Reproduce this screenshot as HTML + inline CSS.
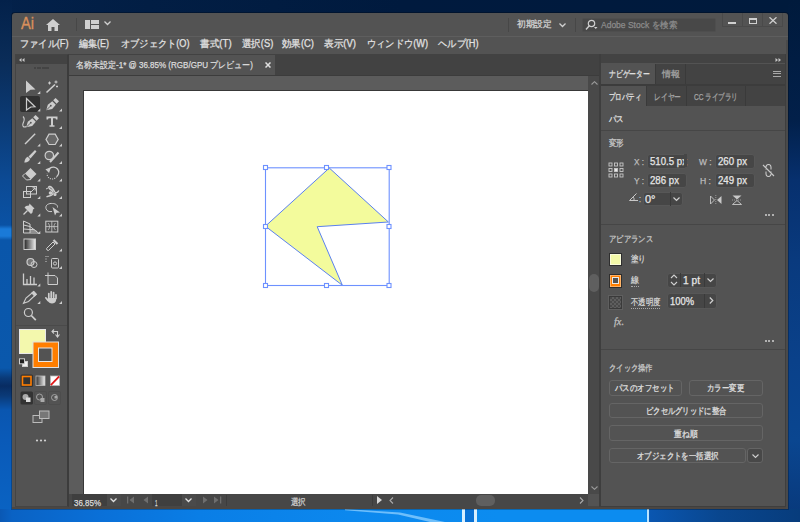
<!DOCTYPE html>
<html><head><meta charset="utf-8">
<style>
*{box-sizing:border-box;margin:0;padding:0}
html,body{width:800px;height:522px;overflow:hidden}
body{position:relative;font-family:"Liberation Sans",sans-serif;color:#e2e2e2;font-size:10px;
background:linear-gradient(180deg,#001634 0px,#00204a 100px,#053a7a 200px,#0a4d9c 300px,#0a58b0 420px,#0a66c8 500px,#0c6fd6 522px);}
.a{position:absolute}
.t{position:absolute;white-space:nowrap;line-height:1;transform-origin:0 0;-webkit-text-stroke:0.25px currentColor}
.fld{position:absolute;background:#464646;border:1px solid #575757;border-radius:3px}
.btn{position:absolute;border:1px solid #656565;border-radius:3px;background:#535353}
</style></head><body>
<!-- wallpaper details -->
<div class="a" style="left:0;top:0;width:800px;height:13px;background:linear-gradient(90deg,#03214a 0,#021e44 150px,#001a3e 400px,#001a3c 800px)"></div>
<div class="a" style="left:0;top:0;width:12px;height:522px;background:linear-gradient(180deg,#03214a 0,#0a2c58 60px,#0b3a74 120px,#0c4a94 180px,#0a52a4 225px,#1a7ad8 229px,#1a7ad8 236px,#0a56aa 240px,#0a58ac 368px,#0a3a78 378px,#082c62 386px,#0a3a78 396px,#0a56b0 410px,#0a5ab8 440px,#0a64c4 522px)"></div>
<div class="a" style="left:788px;top:0;width:12px;height:522px;background:linear-gradient(180deg,#001a3c 0,#02204a 120px,#07306e 180px,#093a7e 260px,#0a418a 360px,#0a4690 440px,#08387a 522px)"></div>
<div class="a" style="left:0;top:509px;width:800px;height:13px;background:linear-gradient(90deg,#0a58b4 0,#0a62c4 12px,#0a70d8 100px,#0a7ee6 200px,#0c88ee 350px,#0c8cf0 500px,#0c8cf0 646px,#0a56b0 650px,#09468e 720px,#073c7c 800px)"></div>
<svg class="a" style="left:0;top:509px" width="800" height="13" viewBox="0 509 800 13"><path d="M345 509 L400 512.5 L445 522 L430 522 L398 514.5 L345 510.2 Z" fill="#8fd0ff" opacity="0.75"/></svg>
<div class="a" style="left:461.5px;top:509px;width:3px;height:13px;background:#d8efff"></div><div class="a" style="left:465px;top:509px;width:9px;height:13px;background:#0a72d6"></div>
<div class="a" style="left:474px;top:509px;width:3px;height:13px;background:#d8efff"></div>
<div class="a" style="left:647px;top:509px;width:2px;height:13px;background:#b8e4ff"></div>

<div class="a" style="left:12px;top:13px;width:776px;height:496px;background:#535353;border-radius:3px 3px 0 0;box-shadow:0 0 0 1px rgba(0,0,0,.25)"></div>

<!-- title bar -->
<div class="t" style="transform:scaleX(0.913);left:20.8px;top:15.8px;font-size:16px;color:#d9905c;-webkit-text-stroke:0.35px #d9905c">Ai</div>
<svg class="a" style="left:46px;top:19px" width="14" height="12" viewBox="0 0 14 12"><path d="M7 0 L14 6 L12 6 L12 12 L8.5 12 L8.5 8 L5.5 8 L5.5 12 L2 12 L2 6 L0 6 Z" fill="#cfcfcf"/></svg>
<div class="a" style="left:76px;top:18px;width:1px;height:13px;background:#474747"></div>
<svg class="a" style="left:85px;top:20px" width="14" height="9" viewBox="0 0 14 9"><rect x="0" y="0" width="5" height="9" fill="#cfcfcf"/><rect x="6" y="0" width="8" height="4" fill="#cfcfcf"/><rect x="6" y="5" width="8" height="4" fill="#cfcfcf"/></svg>
<svg class="a" style="left:104px;top:21px" width="7" height="5" viewBox="0 0 7 5"><path d="M0.5 0.5 L3.5 3.5 L6.5 0.5" stroke="#d0d0d0" stroke-width="1.3" fill="none"/></svg>

<div class="a" style="left:508px;top:18px;width:1px;height:14px;background:#474747"></div>
<div class="t" style="transform:scaleX(0.972);left:517px;top:20px;font-size:9px;color:#d4d4d4">初期設定</div>
<svg class="a" style="left:559px;top:23px" width="7" height="5" viewBox="0 0 7 5"><path d="M0.5 0.5 L3.5 3.5 L6.5 0.5" stroke="#d0d0d0" stroke-width="1.3" fill="none"/></svg>
<div class="a" style="left:575px;top:18px;width:1px;height:14px;background:#474747"></div>
<div class="a" style="left:582px;top:18px;width:134px;height:14px;background:#484848;border:1px solid #4e4e4e;border-radius:2px"></div>
<svg class="a" style="left:585px;top:19px" width="13" height="12" viewBox="0 0 13 12"><circle cx="6.5" cy="4.5" r="3.2" stroke="#d0d0d0" stroke-width="1.2" fill="none"/><path d="M4.3 6.8 L1 10.5" stroke="#d0d0d0" stroke-width="1.4"/><path d="M9 8 L12.5 8 L10.75 10 Z" fill="#d0d0d0"/></svg>
<div class="t" style="transform:scaleX(0.944);left:601px;top:21px;font-size:9px;color:#8c8c8c">Adobe Stock を検索</div>
<div class="a" style="left:722px;top:13px;width:61px;height:14px;border:1px solid #4a4a4a;border-top:none"></div>
<div class="a" style="left:742px;top:13px;width:1px;height:13px;background:#4a4a4a"></div>
<div class="a" style="left:762px;top:13px;width:1px;height:13px;background:#4a4a4a"></div>
<div class="a" style="left:728px;top:21.5px;width:8px;height:2px;background:#d0d0d0"></div>
<div class="a" style="left:749px;top:17.5px;width:7.5px;height:6px;border:1.3px solid #d0d0d0;border-top-width:2px"></div>
<svg class="a" style="left:769px;top:16.5px" width="8" height="7" viewBox="0 0 8 7"><path d="M0.5 0.3 L7.5 6.7 M7.5 0.3 L0.5 6.7" stroke="#d0d0d0" stroke-width="1.3"/></svg>

<!-- menu bar -->
<div class="a" style="left:12px;top:36px;width:776px;height:1px;background:#5e5e5e"></div>
<div class="t" style="transform:scaleX(0.919);left:20.3px;top:39px;font-size:10px">ファイル(F)</div>
<div class="t" style="transform:scaleX(0.900);left:79px;top:39px;font-size:10px">編集(E)</div>
<div class="t" style="transform:scaleX(0.920);left:120.5px;top:39px;font-size:10px">オブジェクト(O)</div>
<div class="t" style="transform:scaleX(0.964);left:200px;top:39px;font-size:10px">書式(T)</div>
<div class="t" style="transform:scaleX(0.939);left:241.5px;top:39px;font-size:10px">選択(S)</div>
<div class="t" style="transform:scaleX(0.944);left:282px;top:39px;font-size:10px">効果(C)</div>
<div class="t" style="transform:scaleX(0.960);left:324px;top:39px;font-size:10px">表示(V)</div>
<div class="t" style="transform:scaleX(0.923);left:366.5px;top:39px;font-size:10px">ウィンドウ(W)</div>
<div class="t" style="transform:scaleX(0.925);left:438.4px;top:39px;font-size:10px">ヘルプ(H)</div>

<!-- left toolbar panel -->
<div class="a" style="left:15px;top:54px;width:54px;height:453px;background:#535353;border:1px solid #444;border-right:2px solid #3c3c3c"></div>
<div class="a" style="left:12px;top:507px;width:776px;height:2px;background:#4b4642"></div>
<div class="a" style="left:16px;top:55px;width:51px;height:9px;background:#434343"></div>
<svg class="a" style="left:19px;top:57.5px" width="6" height="4" viewBox="0 0 6 4"><path d="M2.5 0 L0 2 L2.5 4 Z M5.5 0 L3 2 L5.5 4 Z" fill="#c8c8c8"/></svg>
<div class="a" style="left:33.5px;top:66.5px;width:15px;height:2px;background:repeating-linear-gradient(90deg,#444 0 2px,transparent 2px 2.5px)"></div>
<div class="a" style="left:20px;top:96px;width:20px;height:16px;background:#303030;border-radius:2px"></div>
<div class="a" style="left:16px;top:325px;width:51px;height:1px;background:#4a4a4a"></div>

<!-- document area -->
<div class="a" style="left:69px;top:54px;width:530px;height:21px;background:#424242"></div>
<div class="a" style="left:69px;top:55px;width:206px;height:20px;background:#535353"></div>
<div class="t" style="transform:scaleX(0.891);left:76px;top:60.5px;font-size:9px;color:#dcdcdc">名称未設定-1* @ 36.85% (RGB/GPU プレビュー)</div>
<svg class="a" style="left:265px;top:62px" width="6" height="6" viewBox="0 0 6 6"><path d="M0.5 0.5 L5.5 5.5 M5.5 0.5 L0.5 5.5" stroke="#e0e0e0" stroke-width="1.5"/></svg>
<div class="a" style="left:69px;top:75px;width:530px;height:1px;background:#3c3c3c"></div>
<div class="a" style="left:69px;top:76px;width:519px;height:418px;background:#5c5c5c"></div>
<div class="a" style="left:83px;top:90px;width:505px;height:404px;background:#fff;border-left:1px solid #383838;border-top:1px solid #383838;border-top-left-radius:1px"></div>
<!-- vertical scrollbar -->
<div class="a" style="left:588px;top:76px;width:11px;height:418px;background:#494949"></div>
<svg class="a" style="left:590.5px;top:80.5px" width="7" height="4" viewBox="0 0 7 4"><path d="M0.5 3.5 L3.5 0.7 L6.5 3.5" stroke="#9a9a9a" stroke-width="1.1" fill="none"/></svg>
<svg class="a" style="left:590.5px;top:486px" width="7" height="4" viewBox="0 0 7 4"><path d="M0.5 0.5 L3.5 3.3 L6.5 0.5" stroke="#9a9a9a" stroke-width="1.1" fill="none"/></svg>
<div class="a" style="left:589px;top:274px;width:10px;height:18px;background:#5f5f5f;border-radius:5px"></div>
<div class="a" style="left:599px;top:54px;width:2px;height:453px;background:#3e3e3e"></div>

<!-- status bar -->
<div class="a" style="left:69px;top:494px;width:530px;height:13px;background:#474747"></div>
<div class="a" style="left:72px;top:494px;width:35px;height:12px;background:#3f3f3f"></div>


<!-- right dock -->
<div class="a" style="left:601px;top:54px;width:185px;height:453px;background:#535353;border-right:1px solid #3e3e3e;border-bottom:1px solid #3e3e3e"></div>
<div class="a" style="left:786px;top:40px;width:2px;height:469px;background:#4a4a4a"></div>
<div class="a" style="left:601px;top:54px;width:184px;height:9px;background:#434343"></div>
<div class="a" style="left:601px;top:64px;width:184px;height:20px;background:#434343"></div>
<div class="a" style="left:601px;top:64px;width:54px;height:20px;background:#535353"></div>
<div class="t" style="transform:scaleX(0.759);left:608.5px;top:70px;font-size:9px">ナビゲーター</div>
<div class="t" style="transform:scaleX(1.000);left:662px;top:70px;font-size:9px;color:#a4a4a4">情報</div>
<div class="a" style="left:601px;top:84px;width:184px;height:2px;background:#3c3c3c"></div>
<div class="a" style="left:601px;top:86px;width:184px;height:20px;background:#434343"></div>
<div class="a" style="left:601px;top:86px;width:45px;height:20px;background:#535353"></div>
<div class="t" style="transform:scaleX(0.722);left:608.5px;top:92.5px;font-size:9px">プロパティ</div>
<div class="t" style="transform:scaleX(0.750);left:654px;top:92.5px;font-size:9px;color:#a4a4a4">レイヤー</div>
<div class="t" style="transform:scaleX(0.727);left:694px;top:92.5px;font-size:9px;color:#a4a4a4">CC ライブラリ</div>
<div class="t" style="transform:scaleX(0.833);left:608.5px;top:115px;font-size:9px">パス</div>
<div class="a" style="left:601px;top:130px;width:184px;height:1px;background:#464646"></div>
<div class="t" style="transform:scaleX(0.833);left:608.6px;top:139px;font-size:9px;color:#c8c8c8">変形</div>



<!-- dock header icons -->
<svg class="a" style="left:775px;top:57.5px" width="6" height="4" viewBox="0 0 6 4"><path d="M0.5 0 L3 2 L0.5 4 Z M3.5 0 L6 2 L3.5 4 Z" fill="#c8c8c8"/></svg>
<div class="a" style="left:773px;top:70.5px;width:8px;height:1px;background:#a8a8a8"></div>
<div class="a" style="left:773px;top:73px;width:8px;height:1px;background:#a8a8a8"></div>
<div class="a" style="left:773px;top:75.5px;width:8px;height:1px;background:#a8a8a8"></div>
<div class="a" style="left:655px;top:64px;width:1px;height:20px;background:#3a3a3a"></div>
<div class="a" style="left:685px;top:64px;width:1px;height:20px;background:#3a3a3a"></div>
<div class="a" style="left:646px;top:86px;width:1px;height:20px;background:#3a3a3a"></div>
<div class="a" style="left:686px;top:86px;width:1px;height:20px;background:#3a3a3a"></div>
<div class="a" style="left:744.5px;top:86px;width:1px;height:20px;background:#3a3a3a"></div>

<!-- transform -->
<svg class="a" style="left:608px;top:162px" width="16" height="16" viewBox="0 0 16 16" fill="none" stroke="#c8c8c8" stroke-width="0.9">
<rect x="1" y="1" width="3" height="3"/><rect x="6.5" y="1" width="3" height="3"/><rect x="12" y="1" width="3" height="3"/>
<rect x="1" y="6.5" width="3" height="3"/><rect x="6.5" y="6.5" width="3" height="3" fill="#e8e8e8"/><rect x="12" y="6.5" width="3" height="3"/>
<rect x="1" y="12" width="3" height="3"/><rect x="6.5" y="12" width="3" height="3"/><rect x="12" y="12" width="3" height="3"/>
</svg>
<div class="t" style="transform:scaleX(0.908);left:634px;top:157.5px;font-size:9px;color:#bdbdbd">X :</div>
<div class="t" style="transform:scaleX(0.922);left:634px;top:176.5px;font-size:9px;color:#bdbdbd">Y :</div>
<div class="fld" style="left:647px;top:153.5px;width:40px;height:15px"></div>
<div class="fld" style="left:647px;top:172.5px;width:40px;height:15px"></div>
<div class="t" style="transform:scaleX(0.964);left:650px;top:157px;font-size:10px;color:#e6e6e6">510.5 px</div>
<div class="a" style="left:684px;top:154px;width:3px;height:13px;background:#464646"></div>
<div class="t" style="transform:scaleX(0.966);left:650px;top:176px;font-size:10px;color:#e6e6e6">286 px</div>
<div class="t" style="transform:scaleX(0.926);left:698.6px;top:157.5px;font-size:9px;color:#bdbdbd">W :</div>
<div class="t" style="transform:scaleX(0.955);left:699.5px;top:176.5px;font-size:9px;color:#bdbdbd">H :</div>
<div class="fld" style="left:714.5px;top:153.5px;width:40.5px;height:15px"></div>
<div class="fld" style="left:714.5px;top:172.5px;width:40.5px;height:15px"></div>
<div class="t" style="transform:scaleX(0.966);left:718.4px;top:157px;font-size:10px;color:#e6e6e6">260 px</div>
<div class="t" style="transform:scaleX(0.966);left:718.4px;top:176px;font-size:10px;color:#e6e6e6">249 px</div>
<svg class="a" style="left:762px;top:164px" width="13" height="13" viewBox="0 0 13 13" fill="none" stroke="#c8c8c8" stroke-width="1.1">
<path d="M4 5.5 L4 3 A2.5 2.5 0 0 1 9 3 L9 5.5 M4 7.5 L4 10 A2.5 2.5 0 0 0 9 10 L9 7.5 M1 1 L12 12"/>
</svg>
<svg class="a" style="left:629px;top:193px" width="10" height="8" viewBox="0 0 10 8" fill="none" stroke="#c8c8c8" stroke-width="1"><path d="M0.5 7.5 L9 7.5 M0.5 7.5 L7.5 0.5 M4 4 A3.5 3.5 0 0 1 5 7.5"/></svg>
<div class="t" style="transform:scaleX(0.795);left:639px;top:195px;font-size:9px;color:#bdbdbd">:</div>
<div class="fld" style="left:643px;top:192px;width:40px;height:14px"></div>
<div class="a" style="left:670px;top:192px;width:1px;height:14px;background:#3a3a3a"></div>
<div class="t" style="transform:scaleX(1.098);left:645px;top:194.5px;font-size:10px;color:#e6e6e6">0°</div>
<svg class="a" style="left:673px;top:197px" width="7" height="5" viewBox="0 0 7 5"><path d="M0.5 0.5 L3.5 3.5 L6.5 0.5" stroke="#d0d0d0" stroke-width="1.2" fill="none"/></svg>
<svg class="a" style="left:710px;top:195px" width="32" height="10" viewBox="0 0 32 10">
<path d="M0.5 1 L4.5 5 L0.5 9 Z" fill="none" stroke="#c8c8c8" stroke-width="0.9"/><path d="M11.5 1 L7 5 L11.5 9 Z" fill="#c8c8c8"/><path d="M5.8 0 L5.8 10" stroke="#c8c8c8" stroke-width="0.6" stroke-dasharray="1 1"/>
<path d="M22.5 0.5 L31.5 0.5 L27 4.5 Z" fill="#c8c8c8"/><path d="M22.5 9.5 L31.5 9.5 L27 5.5 Z" fill="none" stroke="#c8c8c8" stroke-width="0.9"/><path d="M22 5 L32 5" stroke="#c8c8c8" stroke-width="0.6" stroke-dasharray="1 1"/>
</svg>
<div class="a" style="left:764.5px;top:213.5px;width:2.2px;height:2.2px;background:#d0d0d0;border-radius:50%"></div>
<div class="a" style="left:768.3px;top:213.5px;width:2.2px;height:2.2px;background:#d0d0d0;border-radius:50%"></div>
<div class="a" style="left:772.1px;top:213.5px;width:2.2px;height:2.2px;background:#d0d0d0;border-radius:50%"></div>
<div class="a" style="left:601px;top:224px;width:184px;height:1px;background:#464646"></div>

<!-- appearance -->
<div class="t" style="transform:scaleX(0.815);left:608.8px;top:235px;font-size:9px;color:#c8c8c8">アピアランス</div>
<div class="a" style="left:608.5px;top:252.5px;width:13.5px;height:13.5px;background:#f3f9a8;border:1px solid #2e2e2e;box-shadow:inset 0 0 0 0.8px #fdfde8"></div>
<div class="t" style="transform:scaleX(0.833);left:630.5px;top:255px;font-size:9px;color:#d6d6d6">塗り</div>
<div class="a" style="left:608.5px;top:274px;width:13.5px;height:13.5px;background:#ff7e00;border:1px solid #2e2e2e;box-shadow:inset 0 0 0 0.8px #ffc080"></div>
<div class="a" style="left:611.7px;top:277.2px;width:7px;height:7px;background:#535353;border:1px solid #e8e8e8"></div>
<div class="t" style="transform:scaleX(0.889);left:630.5px;top:276px;font-size:9px;color:#d6d6d6">線</div>
<div class="a" style="left:630.5px;top:285.5px;width:8px;height:0;border-top:1px dotted #aaa"></div>
<div class="fld" style="left:667px;top:272.5px;width:50px;height:15px"></div>
<div class="a" style="left:680px;top:273px;width:1px;height:14px;background:#3a3a3a"></div>
<div class="a" style="left:703.5px;top:273px;width:1px;height:14px;background:#3a3a3a"></div>
<svg class="a" style="left:670px;top:274px" width="8" height="12" viewBox="0 0 8 12" fill="none" stroke="#d0d0d0" stroke-width="1.1"><path d="M1 4 L4 1 L7 4 M1 8 L4 11 L7 8"/></svg>
<div class="t" style="transform:scaleX(1.019);left:683.2px;top:276px;font-size:10px;color:#e6e6e6">1 pt</div>
<svg class="a" style="left:707px;top:278px" width="7" height="5" viewBox="0 0 7 5"><path d="M0.5 0.5 L3.5 3.5 L6.5 0.5" stroke="#d0d0d0" stroke-width="1.2" fill="none"/></svg>
<div class="a" style="left:608.5px;top:295.5px;width:13px;height:13px;background:repeating-conic-gradient(#5e5e5e 0 25%,#4a4a4a 0 50%) 0 0/4px 4px;border:1px solid #3a3a3a;outline:1px solid #5f5f5f"></div>
<div class="t" style="transform:scaleX(0.819);left:630.5px;top:298px;font-size:9px;color:#d6d6d6">不透明度</div>
<div class="a" style="left:630.5px;top:307.5px;width:29.5px;height:0;border-top:1px dotted #aaa"></div>
<div class="fld" style="left:667px;top:293px;width:50px;height:15.5px"></div>
<div class="a" style="left:703.5px;top:293.5px;width:1px;height:14.5px;background:#3a3a3a"></div>
<div class="t" style="transform:scaleX(0.938);left:669.5px;top:297px;font-size:10px;color:#e6e6e6">100%</div>
<svg class="a" style="left:708.5px;top:297px" width="5" height="7" viewBox="0 0 5 7"><path d="M0.8 0.5 L3.8 3.5 L0.8 6.5" stroke="#d0d0d0" stroke-width="1.2" fill="none"/></svg>
<div class="t" style="transform:scaleX(1.029);left:613.7px;top:317px;font-size:10px;color:#c0c0c0;font-family:'Liberation Serif',serif;font-style:italic">fx.</div>
<div class="a" style="left:764.5px;top:339.5px;width:2.2px;height:2.2px;background:#d0d0d0;border-radius:50%"></div>
<div class="a" style="left:768.3px;top:339.5px;width:2.2px;height:2.2px;background:#d0d0d0;border-radius:50%"></div>
<div class="a" style="left:772.1px;top:339.5px;width:2.2px;height:2.2px;background:#d0d0d0;border-radius:50%"></div>
<div class="a" style="left:601px;top:349px;width:184px;height:1px;background:#464646"></div>

<!-- quick actions -->
<div class="t" style="transform:scaleX(0.809);left:609px;top:364px;font-size:9px;color:#c8c8c8">クイック操作</div>
<div class="btn" style="left:609px;top:380px;width:73px;height:15.5px"></div>
<div class="t" style="transform:scaleX(0.825);left:615.4px;top:384px;font-size:9px;color:#e0e0e0">パスのオフセット</div>
<div class="btn" style="left:689px;top:380px;width:73.7px;height:15.5px"></div>
<div class="t" style="transform:scaleX(0.822);left:707.4px;top:384px;font-size:9px;color:#e0e0e0">カラー変更</div>
<div class="btn" style="left:609px;top:402.5px;width:153.7px;height:15.5px"></div>
<div class="t" style="transform:scaleX(0.811);left:645.6px;top:406.5px;font-size:9px;color:#e0e0e0">ピクセルグリッドに整合</div>
<div class="btn" style="left:609px;top:425.3px;width:153.7px;height:15.3px"></div>
<div class="t" style="transform:scaleX(0.863);left:674.2px;top:429.5px;font-size:9px;color:#e0e0e0">重ね順</div>
<div class="btn" style="left:609px;top:448px;width:137px;height:15.3px"></div>
<div class="t" style="transform:scaleX(0.823);left:637.3px;top:452px;font-size:9px;color:#e0e0e0">オブジェクトを一括選択</div>
<div class="btn" style="left:747px;top:448px;width:15.5px;height:15.3px;background:#484848"></div>
<svg class="a" style="left:751.5px;top:454px" width="7" height="5" viewBox="0 0 7 5"><path d="M0.5 0.5 L3.5 3.5 L6.5 0.5" stroke="#d0d0d0" stroke-width="1.1" fill="none"/></svg>

<!-- status bar details -->
<div class="a" style="left:107px;top:494px;width:14px;height:12px;background:#4a4a4a"></div>
<svg class="a" style="left:110px;top:498px" width="7" height="5" viewBox="0 0 7 5"><path d="M0.5 0.5 L3.5 3.5 L6.5 0.5" stroke="#e0e0e0" stroke-width="1.3" fill="none"/></svg>
<svg class="a" style="left:127px;top:496px" width="24" height="8" viewBox="0 0 24 8" fill="#6e6e6e"><rect x="0" y="0.5" width="1.3" height="7"/><path d="M7 0.5 L2.5 4 L7 7.5 Z M21 0.5 L16.5 4 L21 7.5 Z"/></svg>
<div class="a" style="left:152px;top:494px;width:30px;height:12px;background:#3f3f3f"></div>
<div class="a" style="left:182px;top:494px;width:14px;height:12px;background:#4a4a4a"></div>
<svg class="a" style="left:185px;top:498px" width="7" height="5" viewBox="0 0 7 5"><path d="M0.5 0.5 L3.5 3.5 L6.5 0.5" stroke="#e0e0e0" stroke-width="1.3" fill="none"/></svg>
<svg class="a" style="left:201px;top:496px" width="24" height="8" viewBox="0 0 24 8" fill="#6e6e6e"><path d="M2 0.5 L6.5 4 L2 7.5 Z M13 0.5 L17.5 4 L13 7.5 Z"/><rect x="19" y="0.5" width="1.3" height="7"/></svg>
<div class="a" style="left:226px;top:495px;width:147px;height:11px;border-left:1px solid #3c3c3c;border-right:1px solid #3c3c3c"></div>
<svg class="a" style="left:377px;top:496px" width="5" height="8" viewBox="0 0 5 8"><path d="M0 0 L5 4 L0 8 Z" fill="#d8d8d8"/></svg>
<svg class="a" style="left:389px;top:496.5px" width="5" height="7" viewBox="0 0 5 7"><path d="M4 0.5 L1 3.5 L4 6.5" stroke="#aaa" stroke-width="1.1" fill="none"/></svg>
<div class="a" style="left:476px;top:495px;width:18.5px;height:10.5px;background:#5f5f5f;border-radius:5px"></div>
<svg class="a" style="left:579px;top:496.5px" width="5" height="7" viewBox="0 0 5 7"><path d="M1 0.5 L4 3.5 L1 6.5" stroke="#aaa" stroke-width="1.1" fill="none"/></svg>
<div class="a" style="left:588px;top:494px;width:11px;height:12px;background:#535353"></div>

<div class="t" style="transform:scaleX(0.884);left:74px;top:498.5px;font-size:9px;color:#dcdcdc">36.85%</div>
<div class="t" style="transform:scaleX(0.498);left:155px;top:498.5px;font-size:9px;color:#dcdcdc">1</div>
<div class="t" style="transform:scaleX(0.833);left:291px;top:497.5px;font-size:9px;color:#d0d0d0">選択</div>
<!-- toolbar icons -->
<svg class="a" style="left:0;top:0" width="800" height="522" viewBox="0 0 800 522">
<g fill="#cdcdcd" stroke="none">
<!-- row1 selection -->
<path d="M26 80.5 L35.5 89.5 L30.5 89.8 L26 93 Z"/>
<!-- corner triangles -->
<path d="M40.3 91 L40.3 94 L37.3 94 Z"/>
<path d="M40.3 108.5 L40.3 111.5 L37.3 111.5 Z M62 108.5 L62 111.5 L59 111.5 Z"/>
<path d="M62 126 L62 129 L59 129 Z"/>
<path d="M40.3 143.5 L40.3 146.5 L37.3 146.5 Z M62 143.5 L62 146.5 L59 146.5 Z"/>
<path d="M40.3 161 L40.3 164 L37.3 164 Z M62 161 L62 164 L59 164 Z"/>
<path d="M40.3 178.5 L40.3 181.5 L37.3 181.5 Z M62 178.5 L62 181.5 L59 181.5 Z"/>
<path d="M40.3 196 L40.3 199 L37.3 199 Z M62 196 L62 199 L59 199 Z"/>
<path d="M40.3 213.5 L40.3 216.5 L37.3 216.5 Z M62 213.5 L62 216.5 L59 216.5 Z"/>
<path d="M40.3 231 L40.3 234 L37.3 234 Z"/>
<path d="M62 248.5 L62 251.5 L59 251.5 Z"/>
<path d="M62 266 L62 269 L59 269 Z"/>
<path d="M40.3 283.5 L40.3 286.5 L37.3 286.5 Z"/>
<path d="M40.3 301 L40.3 304 L37.3 304 Z M62 301 L62 304 L59 304 Z"/>
<!-- pen -->
<path d="M46.2 110.3 L47.8 104.8 L52.3 101.2 L55.8 104.7 L52.2 109 Z"/><path d="M53.2 100.3 L55.6 97.9 L59 101.3 L56.6 103.7 Z"/>
<!-- curvature pen -->
<path d="M26.2 127.3 L27.8 121.8 L32.3 118.2 L35.8 121.7 L32.2 126 Z"/><path d="M33.2 117.3 L35.6 114.9 L39 118.3 L36.6 120.7 Z"/>
<!-- T -->
<path d="M46.5 116.5 L57.5 116.5 L57.5 119.5 L56 119.5 L55.5 118.3 L53 118.3 L53 125.3 L54.5 125.3 L54.5 126.8 L49.5 126.8 L49.5 125.3 L51 125.3 L51 118.3 L48.5 118.3 L48 119.5 L46.5 119.5 Z"/>
<!-- brush -->
<path d="M35 150 L36.5 151.5 L30.5 158.5 L28.5 156.5 Z M27.8 156.8 L30 159 C29.5 161.5 27 162.8 24.3 162.5 C24.8 159.8 25.8 157.3 27.8 156.8 Z"/>
<!-- eraser -->
<path d="M30.5 168 L36.5 174 L31 179.5 L25 173.5 Z" />
<!-- pin -->
<path d="M29.5 203.5 L34.5 208.5 L33 209.5 L32.5 212.5 L31 214 L24.5 207.5 L26 206 L29 205.5 Z"/>
<!-- hand -->
<path d="M47.8 298 L56.2 298 L56 300.5 C55.5 302.8 54 303.5 52 303.5 C50 303.5 48.5 302.5 47.5 300.5 Z"/>
<path d="M48.8 298.5 L48.8 293.5 M51.2 297.5 L51.2 291.8 M53.6 297.5 L53.6 292.6 M56 298.5 L56 294.8 M48 300.5 L45.8 297.8" stroke="#cdcdcd" stroke-width="1.7" stroke-linecap="round"/>
</g>
<g fill="none" stroke="#cdcdcd" stroke-width="1.2">
<path d="M46.6 109.9 L50.3 106.2 M26.6 126.9 L30.3 123.2" stroke="#535353" stroke-width="0.9"/><circle cx="50.8" cy="105.7" r="0.9" fill="#535353" stroke="none"/><circle cx="30.8" cy="122.7" r="0.9" fill="#535353" stroke="none"/>
<!-- direct selection hollow arrow -->
<path d="M26.5 98.5 L35 106.8 L30.8 107 L26.5 110 Z"/>
<!-- wand -->
<path d="M46.5 92.5 L55 84.5" stroke-width="1.6"/>
<path d="M49.5 81.5 L49.5 84.5 M48 83 L51 83 M56 80.5 L56 83.5 M54.5 82 L57.5 82 M57 85.5 L57 87.5 M56 86.5 L58 86.5" stroke-width="1"/>
<!-- curvature pen tail -->
<path d="M26.5 126.5 C23.5 128 22 126 23 123.5 C24 121 25.5 119 23 116.5" stroke-width="1.1"/>
<!-- line -->
<path d="M25 144 L35.2 133.8" stroke-width="1.4"/>
<!-- hexagon -->
<path d="M49 134.2 L55.2 134.2 L58.2 139.4 L55.2 144.5 L49 144.5 L46 139.4 Z" fill="#686868"/>
<!-- shaper -->
<circle cx="49.3" cy="155.5" r="4.2" fill="#686868"/>
<path d="M50 162 L58.5 152.5" stroke-width="2"/>
<!-- eraser bottom -->
<path d="M25 173.5 L22.5 176 L26.5 180 L31 179.5" stroke-width="1"/>
<!-- rotate -->
<path d="M50 168.3 A5.3 5.3 0 0 1 56.8 176.5" stroke-width="1.2"/><path d="M56.8 176.5 A5.3 5.3 0 0 1 47 173.8" stroke-width="1.1" stroke-dasharray="1.2 1"/>
<path d="M46.5 169.5 L50 168.3 L48.8 171.8 Z" fill="#cdcdcd"/>
<!-- scale -->
<rect x="23.5" y="191.5" width="7" height="6" stroke-width="1"/>
<rect x="26.5" y="186.5" width="10" height="7.5" stroke-width="1"/>
<path d="M31 192 L35 188 M32.5 187.8 L35.2 187.8 L35.2 190.5" stroke-width="1"/>
<!-- puppet squiggle -->
<path d="M46.5 197 C48.5 195.5 50.5 196.5 52.5 194.5 C54 193 52.5 190.5 50.5 189.5 C48.5 188.5 48 186 50 186.5 C52 187 53.5 189.5 54.5 191.5 C55.5 193.5 57.5 193 58.8 190.5" stroke-width="1.4"/><circle cx="50.5" cy="193" r="1.2" fill="#cdcdcd"/><circle cx="55" cy="194.5" r="1" fill="#cdcdcd"/><path d="M46 189 L48 188" stroke-width="1"/>
<!-- pin line -->
<path d="M27.5 210.5 L23.5 214.5" stroke-width="1.3"/>
<!-- free transform blob+arrow -->
<path d="M46 208.5 C45 205 49 203 52.5 203.5 C56 203.5 58 205.5 57.5 207.5" stroke-width="1"/>
<path d="M46 208.5 C46.5 211 49 212 52 211.5" stroke-width="1"/>
<path d="M52.5 207 L60 212.5 L56.5 212.8 L55 215.5 Z" fill="#cdcdcd" stroke="none"/>
<!-- perspective grid -->
<path d="M23.5 221 L23.5 233 L38.5 233 M23.5 221 L30 224 L30 233 M23.5 225 L30 226.5 L38.5 233 M23.5 229 L30 229.5" stroke-width="1"/>
<path d="M30 229.5 L34.5 229.5 M30 231 L36.5 231" stroke-width="1"/>
<!-- mesh -->
<rect x="45.8" y="221.2" width="12" height="10.8" stroke-width="1"/>
<path d="M51.8 221.2 L51.8 232 M45.8 226.6 L57.8 226.6 M48 223 C50 225 50 228 48 230 M55.5 223 C53.5 225 53.5 228 55.5 230" stroke-width="0.8"/>
<!-- eyedropper -->
<path d="M47 250 L46.5 248.5 L53 242 L55 244 L48.5 250.5 Z" stroke-width="1"/>
<path d="M53.5 240 L57.5 244" stroke-width="2.2"/>
<!-- shape builder -->
<circle cx="30.5" cy="262" r="3.5" fill="#777"/>
<circle cx="34" cy="264.5" r="3" stroke-width="1"/>
<!-- live paint bucket -->
<rect x="51.5" y="258.5" width="7" height="9.5" rx="1" stroke-width="1"/>
<circle cx="55" cy="263.5" r="1.6" stroke-width="1"/>
<path d="M45.5 256.5 L49 256.5 M45.5 259 L47.5 259 M45.5 261.5 L47.5 261.5" stroke-width="1" stroke-dasharray="1 1"/>
<!-- graph -->
<path d="M23.5 273.5 L23.5 284.5 L37 284.5 M27 284.5 L27 279 M30.5 284.5 L30.5 276 M34 284.5 L34 277.5" stroke-width="1.3"/>
<!-- artboard -->
<path d="M48 272.5 L48 275.5 M45 275.5 L48 275.5" stroke-width="1"/>
<path d="M48 275.5 L55 275.5 L57.5 278 L57.5 284.5 L48 284.5 Z" fill="#5f5f5f" stroke-width="1"/>
<!-- pencil -->
<path d="M23.5 303.3 L26 298 L33.5 291.8 L36 294.5 L28.5 301.5 Z" stroke-width="1.1"/><path d="M32 293 L33.8 291.5 L36.3 294.2 L34.6 295.8 Z" fill="#cdcdcd"/>
<!-- zoom -->
<circle cx="28.4" cy="312.5" r="4" stroke-width="1.2"/>
<path d="M31.3 315.5 L35.8 320.2" stroke-width="1.8"/>
</g>
<!-- gradient square -->
<defs><linearGradient id="gr" x1="0" x2="1"><stop offset="0" stop-color="#222"/><stop offset="1" stop-color="#eee"/></linearGradient>
<linearGradient id="gr2" x1="0" x2="1"><stop offset="0" stop-color="#333"/><stop offset="1" stop-color="#eee"/></linearGradient></defs>
<rect x="24" y="239" width="11.5" height="10.5" fill="url(#gr)" stroke="#cdcdcd" stroke-width="1"/>
<!-- fill / stroke swatches -->
<rect x="19.5" y="329.5" width="26" height="24" fill="#f3f8ad" stroke="#e8e8e8" stroke-width="1"/>
<rect x="33" y="342" width="25.5" height="25.5" fill="#ff7e00" stroke="#e0e0e0" stroke-width="1"/>
<rect x="38.5" y="348" width="13.5" height="13.5" fill="#535353" stroke="#e8e8e8" stroke-width="1"/>
<path d="M52 331.5 L57.5 331.5 L57.5 336.5 M55.5 334.5 L57.5 337 L59.5 334.5 M54 329.5 L52 331.5 L54 333.5" fill="none" stroke="#cdcdcd" stroke-width="1.1"/>
<rect x="22.5" y="361.5" width="5" height="5" fill="#f0f0f0" stroke="#cdcdcd" stroke-width="1"/>
<rect x="19.5" y="358.8" width="5" height="5" fill="#222" stroke="#cdcdcd" stroke-width="1"/>
<!-- color mode row -->
<rect x="20.5" y="374.5" width="12.5" height="12.5" rx="1.5" fill="#333"/>
<rect x="22.5" y="376.5" width="8.5" height="8.5" fill="none" stroke="#ff7e00" stroke-width="1.6"/>
<rect x="36" y="376" width="9" height="9.5" fill="url(#gr2)" stroke="#bbb" stroke-width="0.8"/>
<rect x="50.5" y="376" width="9" height="9.5" fill="#fff" stroke="#bbb" stroke-width="0.8"/>
<path d="M50.8 385.2 L59.2 376.3" stroke="#e01818" stroke-width="1.8"/>
<!-- draw modes -->
<rect x="20.5" y="391.5" width="12.5" height="13" rx="1.5" fill="#333"/>
<rect x="34.5" y="391.5" width="12" height="13" rx="1.5" fill="none" stroke="#4b4b4b" stroke-width="0.8"/>
<rect x="48.5" y="391.5" width="12" height="13" rx="1.5" fill="none" stroke="#4b4b4b" stroke-width="0.8"/>
<circle cx="25.5" cy="397" r="3" fill="#aaa"/><rect x="26" y="397.5" width="4.5" height="4.5" fill="#ddd"/>
<circle cx="39.5" cy="397" r="3" fill="none" stroke="#aaa" stroke-width="0.9"/><rect x="40.5" y="398" width="4" height="4" fill="#aaa"/>
<circle cx="54.5" cy="397.5" r="3" fill="none" stroke="#aaa" stroke-width="0.9"/><rect x="54.5" y="396" width="2.5" height="2.5" fill="#aaa"/>
<!-- screen mode -->
<rect x="33" y="415.5" width="9" height="7" fill="#5a5a5a" stroke="#bbb" stroke-width="1"/>
<rect x="39.5" y="411" width="9.5" height="7.5" fill="#777" stroke="#bbb" stroke-width="1"/>
<!-- more dots -->
<circle cx="37" cy="440.5" r="1.1" fill="#d0d0d0"/><circle cx="41" cy="440.5" r="1.1" fill="#d0d0d0"/><circle cx="45" cy="440.5" r="1.1" fill="#d0d0d0"/>
</svg>

<!-- artwork -->
<svg class="a" style="left:0;top:0" width="800" height="522" viewBox="0 0 800 522">
<path d="M329.3 168 L388.4 222 L317.2 226.7 L342.4 285.3 L265.4 226.2 Z" fill="#f3fb9c" stroke="#5a80f0" stroke-width="1"/>
<rect x="265.5" y="167.8" width="123.7" height="117.7" fill="none" stroke="#6d91ff" stroke-width="1.1"/><rect x="263.5" y="165.5" width="4" height="4" fill="#fff" stroke="#6d91ff" stroke-width="1.1"/><rect x="324.5" y="165.5" width="4" height="4" fill="#fff" stroke="#6d91ff" stroke-width="1.1"/><rect x="387" y="165.5" width="4" height="4" fill="#fff" stroke="#6d91ff" stroke-width="1.1"/><rect x="263.5" y="224.5" width="4" height="4" fill="#fff" stroke="#6d91ff" stroke-width="1.1"/><rect x="387" y="224.5" width="4" height="4" fill="#fff" stroke="#6d91ff" stroke-width="1.1"/><rect x="263.5" y="283.5" width="4" height="4" fill="#fff" stroke="#6d91ff" stroke-width="1.1"/><rect x="324.5" y="283.5" width="4" height="4" fill="#fff" stroke="#6d91ff" stroke-width="1.1"/><rect x="387" y="283.5" width="4" height="4" fill="#fff" stroke="#6d91ff" stroke-width="1.1"/>
</svg>
</body></html>
